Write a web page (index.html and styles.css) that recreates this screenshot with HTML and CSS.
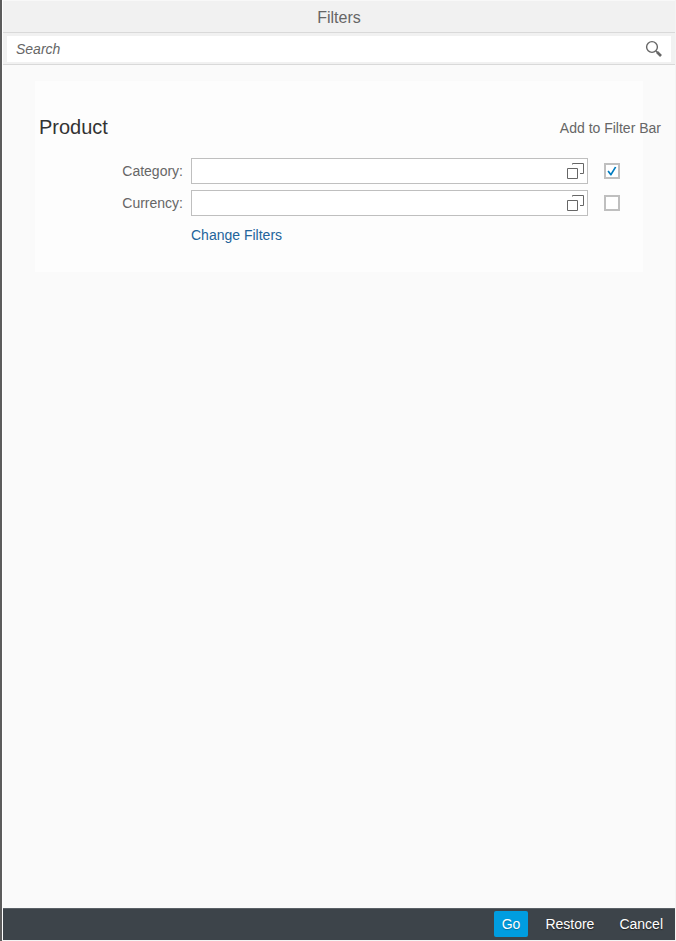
FILE: index.html
```html
<!DOCTYPE html>
<html lang="en">
<head>
<meta charset="utf-8">
<title>Filters</title>
<link rel="stylesheet" href="styles.css">
</head>
<body>
<main class="dialog">
  <header class="title-bar"><h1>Filters</h1></header>
  <form class="search-bar" role="search">
    <div class="search-field">
      <input type="search" placeholder="Search" aria-label="Search">
      <button type="button" class="icon-button" aria-label="Start search">
        <svg width="18" height="18" viewBox="0 0 18 18" fill="none" stroke="#666">
          <circle cx="7" cy="7" r="5.4" stroke-width="1.4"/>
          <path d="M11 11l1.5 1.5" stroke-width="1.4"/>
          <path d="M12 12l4 4" stroke-width="2.6"/>
        </svg>
      </button>
    </div>
  </form>
  <div class="content">
    <section class="group">
      <div class="group-head">
        <h2>Product</h2>
        <span class="column-title">Add to Filter Bar</span>
      </div>
      <div class="filter-row">
        <label for="category">Category:</label>
        <div class="value-field">
          <input type="text" id="category">
          <button type="button" class="icon-button" aria-label="Category value help">
            <svg width="18" height="18" viewBox="0 0 18 18" fill="none" stroke="#666"><path d="M1.5 6.5h10v10h-10zM6.5 2.500V1.500h11v10H14"/></svg>
          </button>
        </div>
        <input type="checkbox" class="tick" aria-label="Add Category to filter bar" checked>
      </div>
      <div class="filter-row">
        <label for="currency">Currency:</label>
        <div class="value-field">
          <input type="text" id="currency">
          <button type="button" class="icon-button" aria-label="Currency value help">
            <svg width="18" height="18" viewBox="0 0 18 18" fill="none" stroke="#666"><path d="M1.5 6.5h10v10h-10zM6.5 2.500V1.500h11v10H14"/></svg>
          </button>
        </div>
        <input type="checkbox" class="tick" aria-label="Add Currency to filter bar">
      </div>
      <div class="filter-row">
        <a href="#" class="change-link">Change Filters</a>
      </div>
    </section>
  </div>
  <footer class="actions">
    <button type="button" class="primary">Go</button>
    <button type="button">Restore</button>
    <button type="button">Cancel</button>
  </footer>
</main>
</body>
</html>
```
FILE: styles.css
```css
* {
  box-sizing: border-box;
}

body {
  margin: 0;
  padding: 0 1px 1px 2px;
  background: linear-gradient(to right, #5c5c5c 2px, #f4f4f4 2px);
  font: 14px/16px "Liberation Sans", Arial, sans-serif;
  color: #666;
}

input,
button {
  font: inherit;
  color: inherit;
}

.dialog {
  display: flex;
  flex-direction: column;
  min-height: calc(100vh - 1px);
  border-left: 1px solid #fff;
  background: #fafafa;
}

.title-bar {
  height: 33px;
  border-top: 1px solid #f8f8f8;
  border-bottom: 1px solid #d9d9d9;
  background: #f1f1f1;
  text-align: center;
}

.title-bar h1 {
  margin: 0;
  font-size: 16px;
  font-weight: normal;
  line-height: 34px;
}

.search-bar {
  padding: 3px 4px 2px;
  border-bottom: 1px solid #d9d9d9;
  background: #f1f1f1;
}

.search-field {
  display: flex;
  align-items: center;
  height: 26px;
  padding: 0 8px 0 9px;
  background: #fff;
}

.search-field input {
  flex: 1;
  min-width: 0;
  padding: 0;
  border: 0;
  outline: 0;
  background: transparent;
}

.search-field input::placeholder {
  color: #666;
  font-style: italic;
  opacity: 1;
}

.icon-button {
  display: flex;
  padding: 0;
  border: 0;
  background: none;
}

.content {
  flex: 1;
  padding: 16px 32px;
}

.group {
  display: flex;
  flex-direction: column;
  gap: 6px;
  padding: 30px 0 24px;
  background: #fdfdfd;
}

.group-head {
  display: flex;
  align-items: center;
  justify-content: space-between;
  height: 32px;
  margin: 0 -18px 9px 4px;
}

.group-head h2 {
  margin: 0;
  font-size: 20px;
  font-weight: normal;
  line-height: 24px;
  color: #333;
}

.column-title {
  padding-top: 2px;
}

.filter-row {
  display: grid;
  grid-template-columns: 148px 1fr 16px;
  align-items: center;
  height: 26px;
  padding-right: 23px;
}

.filter-row label {
  text-align: right;
}

.value-field {
  display: flex;
  align-items: center;
  height: 26px;
  margin: 0 16px 0 8px;
  padding-right: 3px;
  border: 1px solid #bfbfbf;
  background: #fff;
}

.value-field input {
  flex: 1;
  min-width: 0;
  border: 0;
  outline: 0;
  background: transparent;
}

.tick {
  appearance: none;
  width: 16px;
  height: 16px;
  margin: 0;
  border: 2px solid #bfbfbf;
  background: #fff;
}

.tick:checked {
  display: grid;
  place-items: center;
}

.tick:checked::before {
  content: "";
  width: 10px;
  height: 10px;
  background: #007cc0;
  clip-path: polygon(4% 56%, 18% 46%, 38% 72%, 78% 8%, 94% 12%, 44% 96%, 34% 96%);
}

.change-link {
  grid-column: 2;
  margin-left: 8px;
  color: #23649b;
  text-decoration: none;
}

.actions {
  display: flex;
  align-items: flex-start;
  justify-content: flex-end;
  gap: 9px;
  height: 32px;
  padding: 2px 4px 0 0;
  border-top: 1px solid #5a6066;
  background: #3d444a;
}

.actions button {
  height: 26px;
  padding: 0 8px;
  border: 0;
  border-radius: 2px;
  background: transparent;
  color: #fff;
  text-shadow: 0 1px 1px #222;
}

.actions .primary {
  background: #009de0;
  text-shadow: 0 1px 1px #0070a0;
}
```
